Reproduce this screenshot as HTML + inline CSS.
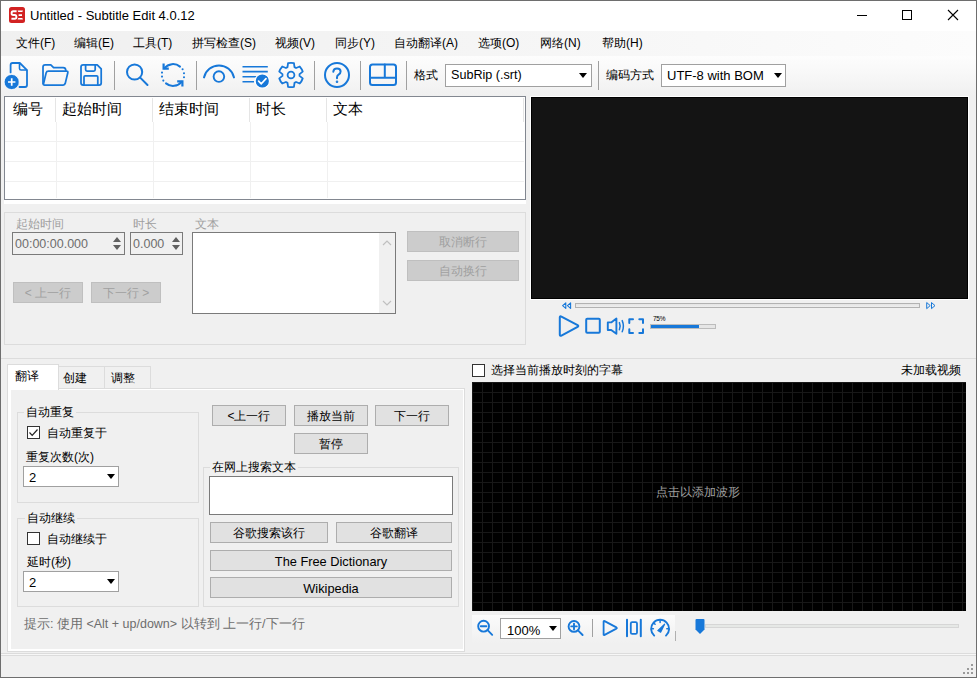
<!DOCTYPE html>
<html><head><meta charset="utf-8">
<style>
*{box-sizing:border-box}
html,body{margin:0;padding:0;width:977px;height:678px;overflow:hidden;background:#f0f0f0}
body{position:relative;font-family:"Liberation Sans",sans-serif;font-size:12px;color:#000}
.a{position:absolute}
.t{position:absolute;white-space:nowrap;line-height:1}
svg{position:absolute;overflow:visible}
.sep{position:absolute;width:1px;background:#a0a0a0}
.combo{position:absolute;background:#fff;border:1px solid #a0a0a0}
.arr{position:absolute;width:0;height:0;border-left:4px solid transparent;border-right:4px solid transparent;border-top:5px solid #000}
.btn{position:absolute;background:#e1e1e1;border:1px solid #adadad;text-align:center;line-height:20px;white-space:nowrap}
.dbtn{position:absolute;background:#cccccc;border:1px solid #bfbfbf;color:#a0a0a0;text-align:center;white-space:nowrap;padding-top:1px}
.grp{position:absolute;border:1px solid #dcdcdc}
.cb{position:absolute;width:13px;height:13px;border:1px solid #333;background:#fff}
.vl{position:absolute;width:1px;background:#f0f0f0}
.hl{position:absolute;height:1px;background:#f0f0f0}
.gt{position:absolute;background:#f0f0f0;padding:0 2px;white-space:nowrap;line-height:1}
</style></head><body>
<!-- window frame -->
<div class="a" style="left:0;top:0;width:977px;height:31px;background:#fff"></div>
<!-- title -->
<svg style="left:9px;top:7px" width="16" height="16"><rect x="0" y="0" width="16" height="16" rx="2.5" fill="#d22222"/>
<path d="M7.6 4.2H4.2Q2.6 4.2 2.6 6.2Q2.6 8 4.2 8H5.8Q7.4 8 7.4 10Q7.4 11.8 5.8 11.8H2.4" stroke="#fff" stroke-width="1.9" fill="none"/>
<path d="M8.6 3.4H14L13.3 5H9.3ZM9.6 7.2H13V8.9H9.6ZM9.3 11H13.3L14 12.6H8.6Z" fill="#fff"/></svg>
<div class="t" style="left:30px;top:9px;font-size:13px">Untitled - Subtitle Edit 4.0.12</div>
<div class="a" style="left:857px;top:15px;width:10px;height:1px;background:#000"></div>
<div class="a" style="left:902px;top:10px;width:10px;height:10px;border:1px solid #000"></div>
<svg style="left:947px;top:9px" width="12" height="12"><path d="M1 1L11 11M11 1L1 11" stroke="#000" stroke-width="1.1"/></svg>
<!-- menu -->
<div class="a" style="left:1px;top:31px;width:975px;height:25px;background:linear-gradient(90deg,#f0f0f0,#f2f2f2 25%,#f7f7f7 65%,#fcfcfc)"></div>
<div class="t" style="left:16px;top:37px">文件(F)</div>
<div class="t" style="left:74px;top:37px">编辑(E)</div>
<div class="t" style="left:133px;top:37px">工具(T)</div>
<div class="t" style="left:192px;top:37px">拼写检查(S)</div>
<div class="t" style="left:275px;top:37px">视频(V)</div>
<div class="t" style="left:335px;top:37px">同步(Y)</div>
<div class="t" style="left:394px;top:37px">自动翻译(A)</div>
<div class="t" style="left:478px;top:37px">选项(O)</div>
<div class="t" style="left:540px;top:37px">网络(N)</div>
<div class="t" style="left:602px;top:37px">帮助(H)</div>
<!-- toolbar -->
<div class="a" style="left:1px;top:56px;width:975px;height:39px;background:linear-gradient(#fdfdfd,#f8f8f8 45%,#f0f0f0)"></div>
<div class="sep" style="left:114px;top:61px;height:29px"></div>
<div class="sep" style="left:196px;top:61px;height:29px"></div>
<div class="sep" style="left:314px;top:61px;height:29px"></div>
<div class="sep" style="left:360px;top:61px;height:29px"></div>
<div class="sep" style="left:406px;top:61px;height:29px"></div>
<div class="sep" style="left:598px;top:61px;height:29px"></div>
<div class="t" style="left:414px;top:69px">格式</div>
<div class="combo" style="left:445px;top:64px;width:147px;height:23px"></div>
<div class="t" style="left:451px;top:69px;font-size:12.6px">SubRip (.srt)</div>
<div class="arr" style="left:579px;top:73px"></div>
<div class="t" style="left:606px;top:69px">编码方式</div>
<div class="combo" style="left:661px;top:64px;width:125px;height:23px"></div>
<div class="t" style="left:667px;top:69px;font-size:13px">UTF-8 with BOM</div>
<div class="arr" style="left:774px;top:73px"></div>
<!-- TOOLBAR ICONS -->
<svg style="left:0;top:0" width="977" height="100" fill="none" stroke="#1778d9" stroke-width="2" stroke-linecap="round" stroke-linejoin="round">
<!-- new doc -->
<path d="M10.6 72.4V65Q10.6 63 12.6 63H19.8L27 70.2V85Q27 87 25 87H19.5" stroke-width="1.8"/>
<path d="M19.5 63.5V68.5Q19.5 70 21 70H26.5" stroke-width="1.6"/>
<circle cx="11.7" cy="82" r="7.6" fill="#1778d9" stroke="#fff" stroke-width="0.8"/>
<path d="M8 82H15.4M11.7 78.3V85.7" stroke="#fff" stroke-width="1.7" stroke-linecap="butt"/>
<!-- folder -->
<path d="M43 83.5V67Q43 64.8 45.2 64.8H50.8L53.6 67.6H63.2Q65.6 67.6 65.8 70.2" stroke-width="1.75"/>
<path d="M43.4 84.2L46.2 72.6Q46.6 71 48.4 71H66.2Q68.2 71 67.8 72.8L65.2 83.6Q64.8 85 63.2 85H44.6Q43.2 85 43.4 84.2Z" stroke-width="1.75"/>
<!-- save -->
<path d="M81 67Q81 64.8 83.2 64.8H97.2L101.2 68.8V83Q101.2 85 99.2 85H83.2Q81 85 81 83Z" stroke-width="1.75"/>
<path d="M85.6 65V69.6Q85.6 71 87 71H93.8Q95.2 71 95.2 69.6V65" stroke-width="1.75"/>
<path d="M84 85V77Q84 75.9 85.1 75.9H96.7Q97.8 75.9 97.8 77V85" stroke-width="1.75"/>
<!-- search -->
<circle cx="134.6" cy="72" r="7.6"/>
<path d="M140.2 77.6L147.5 85"/>
<!-- refresh -->
<path d="M164.4 68.2A11.1 11.1 0 0 1 180 66.6"/>
<path d="M163.6 63.4V68.6H168.8" stroke-linecap="butt" stroke-linejoin="miter" stroke-width="2.2"/>
<path d="M181.6 81.8A11.1 11.1 0 0 1 166 83.4"/>
<path d="M182.4 86.6V81.4H177.2" stroke-linecap="butt" stroke-linejoin="miter" stroke-width="2.2"/>
<g fill="#1778d9" stroke="none"><circle cx="182.6" cy="69.3" r="1.05"/><circle cx="184" cy="73.2" r="1.05"/><circle cx="184" cy="77.2" r="1.05"/><circle cx="162" cy="72.6" r="1.05"/><circle cx="162" cy="76.6" r="1.05"/><circle cx="163.3" cy="80.6" r="1.05"/></g>
<!-- eye -->
<path d="M204 77.4A15.4 15.4 0 0 1 234 77.4" stroke-width="2"/>
<circle cx="218.9" cy="76.6" r="5.3" stroke-width="1.9"/>
<!-- spell -->
<path d="M242.5 66.8H267.8M242.5 71.6H267.8M242.5 76.8H257M242.5 81.7H254" stroke-width="1.6" stroke-linecap="butt"/>
<circle cx="262.3" cy="81" r="7.2" fill="#1778d9" stroke="#fff" stroke-width="1.2"/>
<path d="M258.6 81.2L261.3 83.8L266 78.6" stroke="#fff" stroke-width="1.7"/>
<!-- gear -->
<path d="M287.50 67.14 L288.05 63.16 Q291 62.6 293.95 63.16 L294.50 67.14 L296.05 68.04 L299.78 66.53 Q301.8 68.8 302.73 71.64 L299.55 74.10 L299.55 75.90 L302.73 78.36 Q301.8 81.2 299.78 83.47 L296.05 81.96 L294.50 82.86 L293.95 86.84 Q291 87.4 288.05 86.84 L287.50 82.86 L285.95 81.96 L282.22 83.47 Q280.2 81.2 279.27 78.36 L282.45 75.90 L282.45 74.10 L279.27 71.64 Q280.2 68.8 282.22 66.53 L285.95 68.04Z" stroke-width="1.8"/>
<circle cx="291" cy="75" r="3.4" stroke-width="1.8"/>
<!-- help -->
<circle cx="337" cy="75" r="12"/>
<path d="M333.3 71.8Q333.5 68.4 337 68.4Q340.6 68.4 340.6 71.5Q340.6 73.4 338.6 74.6Q337 75.6 337 77.5V78.3"/>
<circle cx="337" cy="81.8" r="0.5" fill="#1778d9" stroke-width="1.6"/>
<!-- layout -->
<rect x="370" y="64.5" width="26" height="20.5" rx="2.5"/>
<path d="M370 77.7H396M384.8 64.5V77.7"/>
</svg>
<!-- LIST -->
<div class="a" style="left:4px;top:96px;width:522px;height:104px;border:1px solid #828790;background:#fff"></div>
<div class="a" style="left:4px;top:200px;width:522px;height:4px;background:#fff"></div>
<div class="vl" style="left:55px;top:98px;height:24px;background:#e5e5e5"></div>
<div class="vl" style="left:152px;top:98px;height:24px;background:#e5e5e5"></div>
<div class="vl" style="left:249px;top:98px;height:24px;background:#e5e5e5"></div>
<div class="vl" style="left:326px;top:98px;height:24px;background:#e5e5e5"></div>
<div class="vl" style="left:523px;top:98px;height:24px;background:#e5e5e5"></div>
<div class="vl" style="left:56px;top:122px;height:76px"></div>
<div class="vl" style="left:153px;top:122px;height:76px"></div>
<div class="vl" style="left:250px;top:122px;height:76px"></div>
<div class="vl" style="left:327px;top:122px;height:76px"></div>
<div class="hl" style="left:5px;top:141px;width:519px"></div>
<div class="hl" style="left:5px;top:161px;width:519px"></div>
<div class="hl" style="left:5px;top:181px;width:519px"></div>
<div class="t" style="left:13px;top:102px;font-size:14.5px">编号</div>
<div class="t" style="left:62px;top:102px;font-size:14.5px">起始时间</div>
<div class="t" style="left:159px;top:102px;font-size:14.5px">结束时间</div>
<div class="t" style="left:256px;top:102px;font-size:14.5px">时长</div>
<div class="t" style="left:333px;top:102px;font-size:14.5px">文本</div>
<!-- VIDEO -->
<div class="a" style="left:530px;top:96px;width:439px;height:204px;background:#fff"></div>
<div class="a" style="left:531px;top:97px;width:437px;height:202px;background:#141414;border:1px solid #000"></div>
<!-- VIDEO CONTROLS -->
<div class="a" style="left:575px;top:303px;width:345px;height:5px;border:1px solid #b2b2b2;background:linear-gradient(#e4e4e4,#eeeeee)"></div>
<svg style="left:0;top:0" width="977" height="678" fill="none" stroke="#1778d9" stroke-linejoin="round" stroke-linecap="round">
<path d="M565.8 302.8L562.6 305.6L565.8 308.4ZM570.6 302.8L567.4 305.6L570.6 308.4Z" stroke-width="1.1"/>
<path d="M927 302.8L930.2 305.6L927 308.4ZM931.8 302.8L935 305.6L931.8 308.4Z" stroke-width="1"/>
<path d="M559.8 317.5Q559.8 315.8 561.4 316.6L577.6 325.2Q579 326 577.6 326.8L561.4 335.6Q559.8 336.4 559.8 334.6Z" stroke-width="2"/>
<rect x="586.2" y="318.8" width="13.6" height="14" rx="1" stroke-width="2"/>
<path d="M607.8 322.4H611.2L616.4 318.6V333.8L611.2 330H607.8Z" stroke-width="1.9"/>
<path d="M619.4 322.6Q621 326.2 619.4 329.8M622.2 320.6Q624.6 326.2 622.2 331.8" stroke-width="1.5"/>
<path d="M629.3 323V319.3H633M639.3 319.3H643V323M643 329.2V333H639.3M633 333H629.3V329.2" stroke-width="2"/>
</svg>
<div class="a" style="left:650px;top:324px;width:66px;height:5px;background:#e6e6e6;border:1px solid #bcbcbc"></div>
<div class="a" style="left:651px;top:325px;width:48px;height:3px;background:#1778d9"></div>
<div class="t" style="left:653px;top:316px;font-size:6.5px;letter-spacing:-0.3px">75%</div>

<!-- EDIT PANEL -->
<div class="grp" style="left:4px;top:212px;width:522px;height:133px"></div>
<div class="t" style="left:16px;top:218px;color:#a0a0a0">起始时间</div>
<div class="a" style="left:12px;top:232px;width:113px;height:23px;border:1px solid #7a7a7a;background:#f0f0f0"></div>
<div class="t" style="left:15px;top:238px;color:#6d6d6d;font-size:12.5px">00:00:00.000</div>
<div class="t" style="left:133px;top:218px;color:#a0a0a0">时长</div>
<div class="a" style="left:130px;top:232px;width:53px;height:23px;border:1px solid #7a7a7a;background:#f0f0f0"></div>
<div class="t" style="left:133px;top:238px;color:#6d6d6d;font-size:12.5px">0.000</div>
<svg style="left:112px;top:235px" width="10" height="18"><path d="M1 7L5 2L9 7Z M1 10L5 15L9 10Z" fill="#606060"/></svg>
<svg style="left:171px;top:235px" width="10" height="18"><path d="M1 7L5 2L9 7Z M1 10L5 15L9 10Z" fill="#606060"/></svg>
<div class="t" style="left:195px;top:218px;color:#a0a0a0">文本</div>
<div class="a" style="left:192px;top:232px;width:204px;height:82px;border:1px solid #7a7a7a;background:#fff"></div>
<div class="a" style="left:379px;top:233px;width:16px;height:80px;background:#f0f0f0"></div>
<svg style="left:382px;top:237px" width="10" height="70"><path d="M1 8L5 4L9 8M1 64L5 68L9 64" stroke="#c0c0c0" fill="none" stroke-width="1.2"/></svg>
<div class="dbtn" style="left:13px;top:282px;width:70px;height:21px;line-height:19px">&lt; 上一行</div>
<div class="dbtn" style="left:91px;top:282px;width:70px;height:21px;line-height:19px">下一行 &gt;</div>
<div class="dbtn" style="left:407px;top:231px;width:112px;height:21px;line-height:19px">取消断行</div>
<div class="dbtn" style="left:407px;top:260px;width:112px;height:21px;line-height:19px">自动换行</div>
<!-- SPLIT LINE -->
<div class="a" style="left:1px;top:358px;width:975px;height:1px;background:#dcdcdc"></div>
<!-- TABS -->
<div class="a" style="left:7px;top:388px;width:458px;height:264px;background:#fff;border:1px solid #dcdcdc;border-top:none"></div>
<div class="a" style="left:11px;top:390px;width:452px;height:259px;background:#f0f0f0"></div>
<div class="a" style="left:58px;top:366px;width:47px;height:23px;background:#f0f0f0;border:1px solid #dcdcdc"></div>
<div class="a" style="left:104px;top:366px;width:47px;height:23px;background:#f0f0f0;border:1px solid #dcdcdc"></div>
<div class="a" style="left:7px;top:364px;width:52px;height:26px;background:#fff;border:1px solid #dcdcdc;border-bottom:none"></div>
<div class="a" style="left:151px;top:388px;width:314px;height:1px;background:#dcdcdc"></div>
<div class="t" style="left:15px;top:370px">翻译</div>
<div class="t" style="left:63px;top:372px">创建</div>
<div class="t" style="left:111px;top:372px">调整</div>
<!-- tab content -->
<div class="grp" style="left:17px;top:412px;width:182px;height:91px"></div>
<div class="gt" style="left:24px;top:406px">自动重复</div>
<div class="cb" style="left:27px;top:426px"></div>
<svg style="left:27px;top:426px" width="13" height="13"><path d="M2.5 6.5L5.2 9.3L10.5 3.5" stroke="#222" stroke-width="1.2" fill="none"/></svg>
<div class="t" style="left:47px;top:427px">自动重复于</div>
<div class="t" style="left:26px;top:451px">重复次数(次)</div>
<div class="combo" style="left:23px;top:466px;width:96px;height:21px;border-color:#a0a0a0"></div>
<div class="t" style="left:29px;top:471px;font-size:13px">2</div>
<div class="arr" style="left:107px;top:474px"></div>
<div class="grp" style="left:17px;top:518px;width:182px;height:89px"></div>
<div class="gt" style="left:25px;top:512px">自动继续</div>
<div class="cb" style="left:27px;top:532px"></div>
<div class="t" style="left:47px;top:533px">自动继续于</div>
<div class="t" style="left:27px;top:556px">延时(秒)</div>
<div class="combo" style="left:23px;top:571px;width:96px;height:21px"></div>
<div class="t" style="left:29px;top:576px;font-size:13px">2</div>
<div class="arr" style="left:107px;top:579px"></div>
<div class="btn" style="left:212px;top:405px;width:74px;height:21px">&lt;上一行</div>
<div class="btn" style="left:294px;top:405px;width:74px;height:21px">播放当前</div>
<div class="btn" style="left:375px;top:405px;width:74px;height:21px">下一行</div>
<div class="btn" style="left:294px;top:433px;width:74px;height:21px">暂停</div>
<div class="grp" style="left:203px;top:467px;width:256px;height:140px"></div>
<div class="gt" style="left:210px;top:461px">在网上搜索文本</div>
<div class="a" style="left:209px;top:476px;width:244px;height:39px;border:1px solid #7a7a7a;background:#fff"></div>
<div class="btn" style="left:210px;top:522px;width:118px;height:21px">谷歌搜索该行</div>
<div class="btn" style="left:336px;top:522px;width:116px;height:21px">谷歌翻译</div>
<div class="btn" style="left:210px;top:550px;width:242px;height:21px;font-size:12.8px;line-height:22px">The Free Dictionary</div>
<div class="btn" style="left:210px;top:577px;width:242px;height:21px;font-size:12.8px;line-height:22px">Wikipedia</div>
<div class="t" style="left:24px;top:618px;color:#6d6d6d;font-size:12.5px">提示: 使用 &lt;Alt + up/down&gt; 以转到 上一行/下一行</div>
<!-- WAVEFORM -->
<div class="cb" style="left:472px;top:364px"></div>
<div class="t" style="left:491px;top:364px">选择当前播放时刻的字幕</div>
<div class="t" style="left:901px;top:364px">未加载视频</div>
<div class="a" style="left:472px;top:382px;width:494px;height:229px;background-color:#000;background-image:linear-gradient(90deg,#181818 1px,transparent 1px),linear-gradient(#181818 1px,transparent 1px);background-size:10px 10px;background-position:10px 10px"></div>
<div class="t" style="left:656px;top:486px;color:#a0a0a0">点击以添加波形</div>
<div class="a" style="left:472px;top:615px;width:203px;height:28px;background:linear-gradient(#fbfbfb,#f0f0f0)"></div>
<div class="combo" style="left:500px;top:618px;width:61px;height:21px"></div>
<div class="t" style="left:507px;top:624px;font-size:13px">100%</div>
<div class="arr" style="left:549px;top:626px"></div>
<div class="sep" style="left:592px;top:619px;height:18px"></div>
<!-- WAVE ICONS -->
<svg style="left:0;top:0" width="977" height="678" fill="none" stroke="#1778d9" stroke-linejoin="round" stroke-linecap="round" stroke-width="1.9">
<circle cx="483.6" cy="626.2" r="5.4"/>
<path d="M480.8 626.2H486.4M487.6 630.2L492.2 634.8"/>
<circle cx="574" cy="626.4" r="5.4"/>
<path d="M571.2 626.4H576.8M574 623.6V629.2M578 630.4L582.6 635"/>
<path d="M603.6 621.6Q603.6 620.6 604.6 621.1L616.4 627.4Q617.4 628 616.4 628.6L604.6 634.9Q603.6 635.4 603.6 634.4Z" stroke-width="1.8"/>
<path d="M627 619.8V636.2M640.8 619.8V636.2" stroke-width="2"/>
<rect x="630.8" y="622.2" width="6.2" height="11.6" rx="1.4" stroke-width="1.8"/>
<path d="M654.2 635.6A9 9 0 1 1 666 635.6" stroke-width="1.9"/>
<path d="M660.1 620.6V622.4M653.9 623.2L655.1 624.3M651.6 628.8H653.4M666.8 628.8H668.6M654 623.1" stroke-width="1.5"/>
<path d="M657.8 630.6L664.6 624.2L660.6 632.2Z" fill="#1778d9" stroke-width="1.2"/>
</svg>
<div class="sep" style="left:675px;top:631px;height:10px;background:#b0b0b0"></div>
<svg style="left:695px;top:619px" width="11" height="16"><path d="M0.5 1Q0.5 0 1.5 0H8.5Q9.5 0 9.5 1V10.5L5 15L0.5 10.5Z" fill="#1778d9"/></svg>

<div class="a" style="left:705px;top:624px;width:254px;height:4px;background:#e6e8e6;border:1px solid #d6d6d6"></div>
<!-- STATUS -->
<div class="a" style="left:1px;top:653px;width:975px;height:1px;background:#dcdcdc"></div>
<div class="a" style="left:1px;top:654px;width:975px;height:1px;background:#f7f7f7"></div>
<div class="a" style="left:1px;top:655px;width:975px;height:1px;background:#dcdcdc"></div>
<svg style="left:962px;top:663px" width="12" height="12" fill="#9a9a9a"><rect x="9" y="1" width="2" height="2"/><rect x="5" y="5" width="2" height="2"/><rect x="9" y="5" width="2" height="2"/><rect x="1" y="9" width="2" height="2"/><rect x="5" y="9" width="2" height="2"/><rect x="9" y="9" width="2" height="2"/></svg>
<!-- window border -->
<div class="a" style="left:0;top:0;width:977px;height:678px;border:1px solid #6e6e6e"></div>
</body></html>
